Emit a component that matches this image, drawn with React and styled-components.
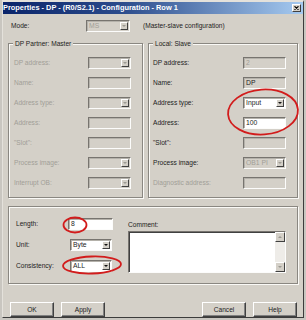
import React from 'react';
import styled, { createGlobalStyle } from 'styled-components';

const FACE = '#d4d0c8';
const TEXT = '#1c1c1c';
const DIM = '#a19e97';

const GlobalStyle = createGlobalStyle`
  html, body { margin: 0; padding: 0; }
  body {
    width: 306px;
    height: 320px;
    overflow: hidden;
    background: #c9c6c0;
    font-family: "Liberation Sans", Arial, sans-serif;
  }
`;

const Screen = styled.div`
  position: relative;
  width: 306px;
  height: 320px;
  padding-left: 2px;
  box-sizing: border-box;
`;

const Dialog = styled.div`
  width: 302px;
  height: 318px;
  box-sizing: border-box;
  background: ${FACE};
  border-top: 2px solid #e4e1db;
  border-left: 1px solid #e4e1db;
  border-right: 1px solid #3c3c3c;
  border-bottom: 1px solid #3c3c3c;
  display: flex;
  flex-direction: column;
  font-size: 6.6px;
  color: ${TEXT};
`;

const TitleBar = styled.div`
  flex: none;
  height: 12px;
  display: flex;
  align-items: center;
  justify-content: space-between;
  padding-right: 2px;
  background: linear-gradient(90deg, #0a246a 0%, #2c4c8c 40%, #a6caf0 100%);
`;

const TitleText = styled.span`
  color: #fff;
  font-weight: bold;
  font-size: 7.4px;
  line-height: 12px;
  white-space: nowrap;
`;

const CloseButton = styled.div`
  width: 9px;
  height: 8px;
  box-sizing: border-box;
  background: ${FACE};
  border: 1px solid;
  border-color: #fff #404040 #404040 #fff;
  display: flex;
  align-items: center;
  justify-content: center;
`;

const Body = styled.div`
  flex: 1;
  display: flex;
  flex-direction: column;
  padding: 6px 5px 0 5px;
`;

const ModeRow = styled.div`
  display: flex;
  align-items: center;
  height: 12px;
  padding-left: 3px;
`;

const ModeLabel = styled.span`
  width: 75px;
  line-height: 8px;
`;

const ModeNote = styled.span`
  margin-left: 13px;
  line-height: 8px;
  white-space: nowrap;
`;

const GroupsRow = styled.div`
  display: flex;
  gap: 5px;
  margin-top: 11px;
`;

const Group = styled.div`
  box-sizing: border-box;
  width: ${(p) => (p.$w ? `${p.$w}px` : 'auto')};
  flex: ${(p) => (p.$w ? 'none' : '1')};
  margin-top: ${(p) => p.$mt || 0}px;
  border: 1px solid #8a8781;
  box-shadow: inset 1px 1px 0 #faf9f6, 1px 1px 0 #faf9f6;
  display: ${(p) => (p.$row ? 'flex' : 'block')};
`;

const Legend = styled.div`
  width: fit-content;
  margin: -4px 0 0 4px;
  padding: 0 2px;
  background: ${FACE};
  line-height: 8px;
  white-space: nowrap;
`;

const FieldGrid = styled.div`
  display: grid;
  grid-template-columns: 1fr 43px;
  grid-auto-rows: 12px;
  row-gap: 8px;
  align-items: center;
  padding: 9px 11px 8px ${(p) => p.$pl}px;
`;

const Label = styled.span`
  line-height: 8px;
  white-space: nowrap;
  color: ${(p) => (p.$disabled ? DIM : TEXT)};
`;

const Box = styled.div`
  box-sizing: border-box;
  height: 12px;
  border: 1px solid;
  border-color: #77746f #fcfcfb #fcfcfb #77746f;
  box-shadow: inset 1px 1px 0 #b4b1aa;
  background: ${(p) => (p.$white ? '#fff' : FACE)};
  color: ${(p) => (p.$dim ? DIM : TEXT)};
  display: flex;
  align-items: center;
  font-size: 6.8px;
  line-height: 10px;
  padding-left: 2px;
  white-space: nowrap;
  overflow: hidden;
`;

const LengthBox = styled(Box)`
  width: 45px;
  margin-left: -2px;
`;

const ComboValue = styled.span`
  flex: 1;
`;

const DropButton = styled.div`
  flex: none;
  box-sizing: border-box;
  width: 8px;
  height: 8px;
  margin-right: 1px;
  background: ${FACE};
  border: 1px solid;
  border-color: #fff #404040 #404040 #fff;
  display: flex;
  align-items: center;
  justify-content: center;
`;

const Arrow = styled.div`
  width: 0;
  height: 0;
  border-left: 2px solid transparent;
  border-right: 2px solid transparent;
  border-${(p) => (p.$up ? 'bottom' : 'top')}: 2px solid ${(p) => (p.$dim ? '#9c9992' : '#111')};
`;

const BottomLeft = styled.div`
  display: grid;
  grid-template-columns: 54px 42px;
  grid-auto-rows: 12px;
  row-gap: 9px;
  align-items: center;
  padding: 11px 0 7px 7px;
`;

const CommentPane = styled.div`
  flex: 1;
  margin-left: 16px;
  padding: 14px 11px 0 0;
  display: flex;
  flex-direction: column;
`;

const CommentLabel = styled.span`
  line-height: 8px;
`;

const TextArea = styled.div`
  box-sizing: border-box;
  margin-top: 2px;
  height: 42px;
  background: #fff;
  border: 1px solid;
  border-color: #77746f #fcfcfb #fcfcfb #77746f;
  box-shadow: inset 1px 1px 0 #404040;
  display: flex;
  justify-content: flex-end;
`;

const ScrollBar = styled.div`
  width: 10px;
  display: flex;
  flex-direction: column;
  justify-content: space-between;
  background: #eeece8;
`;

const ScrollButton = styled.div`
  box-sizing: border-box;
  width: 10px;
  height: 10px;
  background: ${FACE};
  border: 1px solid;
  border-color: #fff #404040 #404040 #fff;
  display: flex;
  align-items: center;
  justify-content: center;
`;

const ButtonRow = styled.div`
  display: flex;
  justify-content: space-between;
  margin-top: 18px;
  padding: 0 1px 0 2px;
`;

const ButtonGroup = styled.div`
  display: flex;
  gap: 7px;
`;

const Button = styled.div`
  box-sizing: border-box;
  width: 44px;
  height: 15px;
  background: ${FACE};
  border: 1px solid;
  border-color: #fff #404040 #404040 #fff;
  box-shadow: inset -1px -1px 0 #808080;
  display: flex;
  align-items: center;
  justify-content: center;
  font-size: 6.6px;
`;

const Marks = styled.svg`
  position: absolute;
  left: 0;
  top: 0;
  pointer-events: none;
`;

const Combo = ({ value, white, dim }) => (
  <Box $white={white} $dim={dim}>
    <ComboValue>{value}</ComboValue>
    <DropButton>
      <Arrow $dim={dim} />
    </DropButton>
  </Box>
);

const masterRows = [
  ['DP address:', 'combo'],
  ['Name:', 'text'],
  ['Address type:', 'combo'],
  ['Address:', 'text'],
  ['"Slot":', 'text'],
  ['Process image:', 'combo'],
  ['Interrupt OB:', 'combo'],
];

export default function App() {
  return (
    <Screen>
      <GlobalStyle />
      <Dialog>
        <TitleBar>
          <TitleText>Properties - DP - (R0/S2.1) - Configuration - Row 1</TitleText>
          <CloseButton>
            <svg width="5" height="4" viewBox="0 0 5 4">
              <path d="M0.5 0.3 L4.5 3.7 M4.5 0.3 L0.5 3.7" stroke="#000" strokeWidth="1.1" />
            </svg>
          </CloseButton>
        </TitleBar>
        <Body>
          <ModeRow>
            <ModeLabel>Mode:</ModeLabel>
            <div style={{ width: 44 }}>
              <Combo value="MS" dim />
            </div>
            <ModeNote>(Master-slave configuration)</ModeNote>
          </ModeRow>

          <GroupsRow>
            <Group $w={135}>
              <Legend>DP Partner: Master</Legend>
              <FieldGrid $pl={5}>
                {masterRows.map(([label, kind]) => (
                  <React.Fragment key={label}>
                    <Label $disabled>{label}</Label>
                    {kind === 'combo' ? <Combo value="" dim /> : <Box />}
                  </React.Fragment>
                ))}
              </FieldGrid>
            </Group>
            <Group>
              <Legend>Local: Slave</Legend>
              <FieldGrid $pl={4}>
                <Label>DP address:</Label>
                <Box $dim>2</Box>
                <Label>Name:</Label>
                <Box>DP</Box>
                <Label>Address type:</Label>
                <Combo value="Input" white />
                <Label>Address:</Label>
                <Box $white>100</Box>
                <Label>"Slot":</Label>
                <Box />
                <Label>Process image:</Label>
                <Combo value="OB1 PI" dim />
                <Label $disabled>Diagnostic address:</Label>
                <Box />
              </FieldGrid>
            </Group>
          </GroupsRow>

          <Group $mt={8} $row>
            <BottomLeft>
              <Label>Length:</Label>
              <LengthBox $white>8</LengthBox>
              <Label>Unit:</Label>
              <Combo value="Byte" white />
              <Label>Consistency:</Label>
              <Combo value="ALL" white />
            </BottomLeft>
            <CommentPane>
              <CommentLabel>Comment:</CommentLabel>
              <TextArea>
                <ScrollBar>
                  <ScrollButton>
                    <Arrow $up $dim />
                  </ScrollButton>
                  <ScrollButton>
                    <Arrow $dim />
                  </ScrollButton>
                </ScrollBar>
              </TextArea>
            </CommentPane>
          </Group>

          <ButtonRow>
            <ButtonGroup>
              <Button>OK</Button>
              <Button>Apply</Button>
            </ButtonGroup>
            <ButtonGroup>
              <Button>Cancel</Button>
              <Button>Help</Button>
            </ButtonGroup>
          </ButtonRow>
        </Body>
      </Dialog>

      <Marks width="306" height="320" viewBox="0 0 306 320">
        <g fill="none" stroke="#d21c1c" strokeWidth="1.8">
          <ellipse cx="263" cy="112" rx="35" ry="22.5" transform="rotate(-4 263 112)" />
          <ellipse cx="75" cy="225" rx="11.5" ry="7.5" />
          <ellipse cx="92" cy="265" rx="29" ry="8.5" transform="rotate(-2 92 265)" />
        </g>
      </Marks>
    </Screen>
  );
}
